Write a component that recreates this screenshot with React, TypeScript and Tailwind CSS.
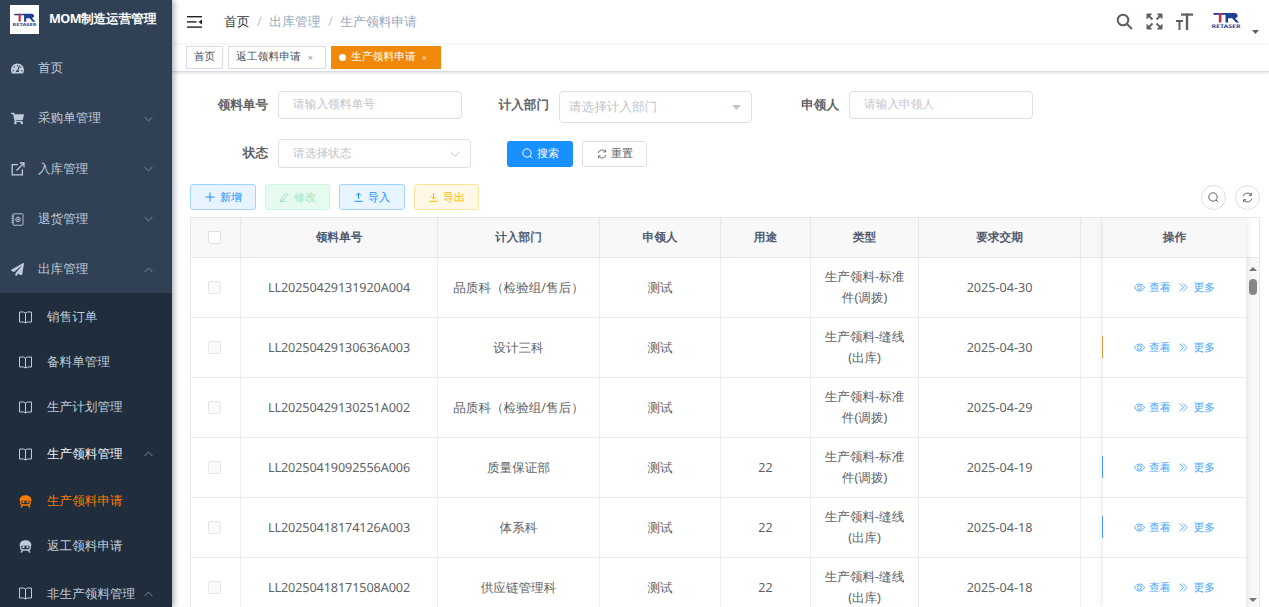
import React from "react";
import { FaTachometerAlt, FaShoppingCart, FaPaperPlane } from "react-icons/fa";

const Logo = ({ w, h }: { w: number; h: number }) => (
  <svg width={w} height={h} viewBox="0 0 30 17">
    <rect x="2.500" y="1" width="13" height="1.800" fill="#1f3f94" />
    <rect x="7.800" y="1" width="2.600" height="9.500" fill="#d02a3a" />
    <path d="M14.500 1h9c4 0 4.200 5 .5 5.200l4.300 4.300h-3.200l-4-4.200h-4v4.200h-2.600z" fill="#1f3f94" />
    <text x="0.500" y="16.200" textLength="29" lengthAdjust="spacingAndGlyphs" fontSize="5" fontWeight="700" fill="#2b4a9b">RETASER</text>
  </svg>
);

const Book = ({ c = "#bfcbd9" }: { c?: string }) => (
  <svg width="13" height="13" viewBox="0 0 13 13" fill="none" stroke={c} strokeWidth="1">
    <path d="M.5 1h4.200l1.800 1 1.800-1h4.200v10H8.300l-1.800 1-1.800-1H.5zM6.500 2v10" />
  </svg>
);

const Bot = ({ c }: { c: string }) => (
  <svg width="13" height="13" viewBox="0 0 13 13" fill="none" stroke={c} strokeWidth="1.300">
    <path d="M1.200 5C1.500 2.200 3.600.8 6.500.8s5 1.400 5.300 4.200z" fill={c} />
    <path d="M1.800 5v2.800c0 1.300 1 2.200 2.300 2.200h4.800c1.300 0 2.300-.9 2.300-2.200V5" />
    <path d="M3.800 10 2 12.500M9.200 10l1.800 2.500" />
    <circle cx="4.500" cy="7.200" r=".5" fill={c} />
    <circle cx="8.500" cy="7.200" r=".5" fill={c} />
  </svg>
);

const ExtLink = () => (
  <svg width="14" height="14" viewBox="0 0 14 14" fill="none" stroke="#bfcbd9" strokeWidth="1.300">
    <path d="M7 2.600H1.200v10.200h10.200V7.200M5.500 8.500 12.800 1.200M8.800 1H13v4.200" />
  </svg>
);

const Notebook = () => (
  <svg width="13" height="13" viewBox="0 0 13 13" fill="none" stroke="#bfcbd9" strokeWidth=".9">
    <rect x="2" y=".8" width="10" height="11.400" rx=".6" />
    <circle cx="7" cy="6.500" r="2.300" />
    <circle cx="7" cy="6.500" r=".7" fill="#bfcbd9" />
    <path d="M.5 3H3M.5 5.200H3M.5 7.400H3M.5 9.600H3" />
  </svg>
);

const Chevron = ({ up }: { up?: boolean }) => (
  <svg width="9" height="6" viewBox="0 0 9 6" fill="none" stroke="#7e8b9b" strokeWidth="1" className={up ? "rotate-180" : ""}>
    <path d="M.6 1 4.500 4.900 8.400 1" />
  </svg>
);

const SearchIco = ({ c = "currentColor", s = 11 }: { c?: string; s?: number }) => (
  <svg width={s} height={s} viewBox="0 0 11 11" fill="none" stroke={c} strokeWidth="1">
    <circle cx="5" cy="5" r="4.200" />
    <path d="M8 8l2.200 2.200" />
  </svg>
);

const Refresh = ({ c = "currentColor", s = 11 }: { c?: string; s?: number }) => (
  <svg width={s} height={s} viewBox="0 0 11 11" fill="none" stroke={c} strokeWidth="1">
    <path d="M1.200 4.400A4.400 4.400 0 0 1 9 2.800M9.800 6.600A4.400 4.400 0 0 1 2 8.200" />
    <path d="M9.400.9v2.400H7M1.600 10.100V7.700H4" />
  </svg>
);

const Eye = () => (
  <svg width="11" height="9" viewBox="0 0 11 9" fill="none" stroke="#46a6ff" strokeWidth=".9">
    <path d="M.5 4.500C1.700 2.200 3.400 1 5.500 1s3.800 1.200 5 3.500C9.300 6.800 7.600 8 5.500 8S1.700 6.800.5 4.500z" />
    <circle cx="5.500" cy="4.500" r="2" />
  </svg>
);

const DArrow = () => (
  <svg width="9" height="9" viewBox="0 0 9 9" fill="none" stroke="#46a6ff" strokeWidth=".9">
    <path d="M.8.6 4.600 4.500.8 8.400M4.200.6 8 4.500 4.200 8.400" />
  </svg>
);

type Item = { label: string; icon: React.ReactNode; arrow?: "up" | "down"; tone?: string; h: string };

const topItems: Item[] = [
  { label: "首页", icon: <FaTachometerAlt size={13} color="#bfcbd9" />, h: "h-[50.400px]" },
  { label: "采购单管理", icon: <FaShoppingCart size={13} color="#bfcbd9" />, arrow: "down", h: "h-[50.400px]" },
  { label: "入库管理", icon: <ExtLink />, arrow: "down", h: "h-[50.400px]" },
  { label: "退货管理", icon: <Notebook />, arrow: "down", h: "h-[50.400px]" },
  { label: "出库管理", icon: <FaPaperPlane size={13} color="#bfcbd9" />, arrow: "up", h: "h-[50.400px]" },
];

const subItems: Item[] = [
  { label: "销售订单", icon: <Book />, h: "h-[45px]" },
  { label: "备料单管理", icon: <Book />, h: "h-[45px]" },
  { label: "生产计划管理", icon: <Book />, h: "h-[45px]" },
  { label: "生产领料管理", icon: <Book />, arrow: "up", tone: "text-[#f4f4f5]", h: "h-[49px]" },
  { label: "生产领料申请", icon: <Bot c="#f57c00" />, tone: "text-[#f57c00]", h: "h-[45px]" },
  { label: "返工领料申请", icon: <Bot c="#bfcbd9" />, h: "h-[45px]" },
  { label: "非生产领料管理", icon: <Book />, arrow: "up", h: "h-[50px]" },
];

const MenuRow = ({ item, sub }: { item: Item; sub?: boolean }) => (
  <div className={`flex items-center shrink-0 ${item.h} ${sub ? "pl-[19px]" : "pl-[11px]"} pr-[19px]`}>
    <span className={`flex justify-start shrink-0 ${sub ? "w-[28px]" : "w-[27px]"}`}>{item.icon}</span>
    <span className={`flex-1 whitespace-nowrap text-[12.600px] ${item.tone ?? "text-[#bfcbd9]"}`}>{item.label}</span>
    {item.arrow && <Chevron up={item.arrow === "up"} />}
  </div>
);

const Sidebar = () => (
  <aside className="w-[172px] shrink-0 h-full bg-[#304156] flex flex-col overflow-hidden shadow-[2px_0_6px_rgba(0,21,41,0.35)] z-20">
    <div className="h-[43px] shrink-0 flex items-start pl-[10px] pt-[5px]">
      <div className="w-[29px] h-[29px] bg-white flex items-center justify-center">
        <Logo w={25} h={14} />
      </div>
      <span className="ml-[10px] mt-[5px] text-white font-bold text-[12.600px] whitespace-nowrap">
        <span className="tracking-[-0.6px]">MOM</span>制造运营管理
      </span>
    </div>
    {topItems.map((i) => (
      <MenuRow key={i.label} item={i} />
    ))}
    <div className="bg-[#1f2d3d] flex flex-col flex-1 -mt-[2px] pt-[2px]">
      {subItems.map((i) => (
        <MenuRow key={i.label} item={i} sub />
      ))}
    </div>
  </aside>
);

const TopBar = () => (
  <div className="h-[43px] shrink-0 flex items-center pl-[15px] pr-[10px] bg-white shadow-[0_1px_3px_rgba(0,21,41,0.06)] relative z-10">
    <svg width="15" height="12" viewBox="0 0 15 12" fill="#222">
      <rect y="0" width="15" height="1.400" />
      <rect y="5.200" width="9.500" height="1.400" />
      <rect y="10.400" width="15" height="1.400" />
      <path d="M15 3.400v5l-3.500-2.500z" />
    </svg>
    <div className="ml-[22px] flex items-center text-[12.800px]">
      <span className="text-[#303133]">首页</span>
      <span className="mx-[7.500px] text-[#c0c4cc]">/</span>
      <span className="text-[#97a8be]">出库管理</span>
      <span className="mx-[7.500px] text-[#c0c4cc]">/</span>
      <span className="text-[#97a8be]">生产领料申请</span>
    </div>
    <div className="ml-auto flex items-center">
      <svg width="17" height="17" viewBox="0 0 17 17" fill="none" stroke="#5a5e66" strokeWidth="2">
        <circle cx="7" cy="7" r="5.300" />
        <path d="M11 11l5 5" />
      </svg>
      <svg className="ml-[13px]" width="17" height="17" viewBox="0 0 17 17" fill="#5a5e66" stroke="#5a5e66" strokeWidth="1">
        <path d="M1 1h4.500L1 5.500zM16 1v4.500L11.500 1zM16 16h-4.500L16 11.500zM1 16v-4.500L5.500 16z" />
        <path d="M3 3l3.500 3.500M14 3l-3.500 3.500M14 14l-3.500-3.500M3 14l3.500-3.500" strokeWidth="1.800" />
      </svg>
      <svg className="ml-[13px]" width="17" height="17" viewBox="0 0 17 17" fill="#5a5e66">
        <rect x="5" y="0.500" width="12" height="2.200" />
        <rect x="9.800" y="0.500" width="2.400" height="16.500" />
        <rect x="0" y="7" width="7" height="2" />
        <rect x="2.500" y="7" width="2" height="10" />
      </svg>
      <span className="ml-[18px] mt-[-3px]">
        <Logo w={30} h={17} />
      </span>
      <svg className="ml-[11px] mt-[20px]" width="7" height="4" viewBox="0 0 7 4" fill="#5a5e66">
        <path d="M0 0h7L3.500 4z" />
      </svg>
    </div>
  </div>
);

const TagsBar = () => (
  <div className="h-[29px] shrink-0 flex items-start pt-[3px] pl-[14px] gap-[5px] bg-white border-b border-[#d8dce5] shadow-[0_1px_3px_rgba(0,0,0,0.12)] text-[10.800px] relative z-[5]">
    <span className="h-[23px] w-[37px] flex items-center justify-center border border-[#d8dce5] text-[#495060]">首页</span>
    <span className="h-[23px] w-[98px] flex items-center pl-[7px] border border-[#d8dce5] text-[#495060]">
      返工领料申请<span className="ml-[7px] text-[9px] text-[#8a8f99]">×</span>
    </span>
    <span className="h-[23px] w-[110px] flex items-center pl-[7px] bg-[#f0880a] border border-[#f0880a] text-white">
      <span className="w-[7px] h-[7px] rounded-full bg-white mr-[5px]" />
      生产领料申请<span className="ml-[6px] text-[9px] text-[#fde3c4]">×</span>
    </span>
  </div>
);

const Label = ({ children }: { children: React.ReactNode }) => (
  <label className="w-[78px] mr-[10px] shrink-0 text-right font-bold text-[12.600px] text-[#606266]">{children}</label>
);

const Field = ({ ph, w, h, small, right, pl = "pl-[14px]" }: { ph: string; w: string; h: string; small?: boolean; right?: React.ReactNode; pl?: string }) => (
  <div className={`${w} ${h} ${pl} pr-[10px] flex items-center justify-between rounded-[4px] border border-[#dcdfe6] bg-white`}>
    <span className={`${small ? "text-[11.700px]" : "text-[12.600px]"} text-[#c0c4cc] whitespace-nowrap`}>{ph}</span>
    {right}
  </div>
);

const SearchForm = () => (
  <div className="flex flex-col">
    <div className="flex items-start">
      <div className="flex items-center h-[28px]">
        <Label>领料单号</Label>
        <Field ph="请输入领料单号" w="w-[184px]" h="h-[28px]" small />
      </div>
      <div className="flex items-start ml-[9px]">
        <div className="h-[28px] flex items-center">
          <Label>计入部门</Label>
        </div>
        <Field
          ph="请选择计入部门"
          w="w-[193px]"
          h="h-[32px]"
          pl="pl-[9px]"
          right={
            <svg width="9" height="5" viewBox="0 0 9 5" fill="#c0c4cc">
              <path d="M0 0h9L4.500 5z" />
            </svg>
          }
        />
      </div>
      <div className="flex items-center h-[28px] ml-[9px]">
        <Label>申领人</Label>
        <Field ph="请输入申领人" w="w-[184px]" h="h-[28px]" small />
      </div>
    </div>
    <div className="flex items-center mt-[16px] h-[29px]">
      <Label>状态</Label>
      <Field
        ph="请选择状态"
        w="w-[193px]"
        h="h-[29px]"
        small
        right={
          <svg width="10" height="6" viewBox="0 0 10 6" fill="none" stroke="#c0c4cc" strokeWidth="1">
            <path d="M.6.800 5 5.200 9.400.800" />
          </svg>
        }
      />
      <button className="ml-[36px] w-[66px] h-[26px] rounded-[3px] bg-[#1890ff] text-white text-[10.800px] flex items-center justify-center gap-[4px]">
        <SearchIco c="#fff" /> 搜索
      </button>
      <button className="ml-[9px] w-[65px] h-[26px] rounded-[3px] bg-white border border-[#dcdfe6] text-[#606266] text-[10.800px] flex items-center justify-center gap-[4px]">
        <Refresh c="#606266" s={10} /> 重置
      </button>
    </div>
  </div>
);

const ToolBtn = ({ label, icon, cls, w }: { label: string; icon: React.ReactNode; cls: string; w: string }) => (
  <button className={`${w} h-[26px] rounded-[3px] border text-[10.800px] flex items-center justify-center gap-[5px] ${cls}`}>
    {icon}
    {label}
  </button>
);

const Toolbar = () => (
  <div className="flex items-center mt-[16px] h-[26px]">
    <div className="flex gap-[9px]">
      <ToolBtn
        w="w-[66px]"
        label="新增"
        cls="bg-[#e8f4ff] border-[#a3d3ff] text-[#1890ff]"
        icon={
          <svg width="10" height="10" viewBox="0 0 10 10" stroke="#1890ff" strokeWidth="1">
            <path d="M5 .5v9M.5 5h9" />
          </svg>
        }
      />
      <ToolBtn
        w="w-[65px]"
        label="修改"
        cls="bg-[#e7faf0] border-[#d0f5e0] text-[#a3e7c0]"
        icon={
          <svg width="10" height="10" viewBox="0 0 10 10" fill="none" stroke="#8fe0b0" strokeWidth=".9">
            <path d="M2 7 7 1.200 8.800 2.800 3.800 8.200 1.800 8.600zM.8 9.500h5" />
          </svg>
        }
      />
      <ToolBtn
        w="w-[66px]"
        label="导入"
        cls="bg-[#e8f4ff] border-[#a3d3ff] text-[#1890ff]"
        icon={
          <svg width="9" height="10" viewBox="0 0 9 10" fill="none" stroke="#1890ff" strokeWidth="1">
            <path d="M.5 9.300h8M4.500 7V1.200M2 3.500 4.500 1 7 3.500" />
          </svg>
        }
      />
      <ToolBtn
        w="w-[65px]"
        label="导出"
        cls="bg-[#fff8e6] border-[#ffe399] text-[#ffba00]"
        icon={
          <svg width="9" height="10" viewBox="0 0 9 10" fill="none" stroke="#ffba00" strokeWidth="1">
            <path d="M.5 9.300h8M4.500 1v5.800M2 4.500 4.500 7 7 4.500" />
          </svg>
        }
      />
    </div>
    <div className="ml-auto flex gap-[9px]">
      <span className="w-[25px] h-[25px] rounded-full border border-[#dcdfe6] bg-white flex items-center justify-center">
        <SearchIco c="#606266" />
      </span>
      <span className="w-[25px] h-[25px] rounded-full border border-[#dcdfe6] bg-white flex items-center justify-center">
        <Refresh c="#606266" />
      </span>
    </div>
  </div>
);

const rows = [
  { no: "LL20250429131920A004", dept: "品质科（检验组/售后）", use: "", type: "生产领料-标准件(调拨)", date: "2025-04-30", tag: "" },
  { no: "LL20250429130636A003", dept: "设计三科", use: "", type: "生产领料-缝线(出库)", date: "2025-04-30", tag: "bg-[#e6a23c]" },
  { no: "LL20250429130251A002", dept: "品质科（检验组/售后）", use: "", type: "生产领料-标准件(调拨)", date: "2025-04-29", tag: "" },
  { no: "LL20250419092556A006", dept: "质量保证部", use: "22", type: "生产领料-标准件(调拨)", date: "2025-04-19", tag: "bg-[#46a6ff]" },
  { no: "LL20250418174126A003", dept: "体系科", use: "22", type: "生产领料-缝线(出库)", date: "2025-04-18", tag: "bg-[#46a6ff]" },
  { no: "LL20250418171508A002", dept: "供应链管理科", use: "22", type: "生产领料-缝线(出库)", date: "2025-04-18", tag: "" },
];

const cols = ["w-[50px]", "w-[197px]", "w-[162px]", "w-[121px]", "w-[90px]", "w-[108px]", "w-[162px]", "w-[120px]"];
const heads = ["", "领料单号", "计入部门", "申领人", "用途", "类型", "要求交期", ""];

const hCell = "h-[40px] shrink-0 flex items-center justify-center bg-[#f8f8f9] border-r border-b border-[#e4e8ee] font-bold text-[11.700px] text-[#515a6e]";
const bCell = "h-[60px] shrink-0 flex items-center justify-center border-r border-b border-[#e9ecf1] text-[12.600px] leading-[21px] text-[#606266] text-center pb-[1px]";

const Check = ({ head }: { head?: boolean }) => (
  <span className={`w-[13px] h-[13px] rounded-[2px] border mr-[3px] ${head ? "border-[#dcdfe6] bg-white" : "border-[#e4e7ed] bg-[#fafafa]"}`} />
);

const Table = () => (
  <div className="mt-[7px] flex flex-1 min-h-0 border-l border-t border-r border-[#e4e8ee] overflow-hidden">
    <div className="flex-1 min-w-0 overflow-hidden">
      <div className="flex">
        {heads.map((h, i) => (
          <div key={i} className={`${cols[i]} ${hCell}`}>
            {i === 0 ? <Check head /> : h}
          </div>
        ))}
      </div>
      {rows.map((r) => (
        <div key={r.no} className="flex">
          <div className={`${cols[0]} ${bCell}`}>
            <Check />
          </div>
          <div className={`${cols[1]} ${bCell} tracking-[-0.08px]`}>{r.no}</div>
          <div className={`${cols[2]} ${bCell}`}>{r.dept}</div>
          <div className={`${cols[3]} ${bCell}`}>测试</div>
          <div className={`${cols[4]} ${bCell}`}>{r.use}</div>
          <div className={`${cols[5]} ${bCell} px-[9px]`}>{r.type}</div>
          <div className={`${cols[6]} ${bCell}`}>{r.date}</div>
          <div className={`${cols[7]} ${bCell} !justify-start pl-[21px]`}>
            {r.tag && <span className={`w-[60px] h-[22px] ${r.tag}`} />}
          </div>
        </div>
      ))}
    </div>
    <div className="w-[143px] shrink-0 relative z-10 bg-white shadow-[0_0_7px_rgba(0,0,0,0.12)]">
      <div className={`${hCell} !border-r-0`}>操作</div>
      {rows.map((r) => (
        <div key={r.no} className="h-[60px] flex items-center justify-center border-b border-[#e9ecf1] text-[10.800px] text-[#46a6ff]">
          <Eye />
          <span className="ml-[4px] mt-[1px]">查看</span>
          <span className="ml-[8px]">
            <DArrow />
          </span>
          <span className="ml-[6px] mt-[1px]">更多</span>
        </div>
      ))}
    </div>
    <div className="w-[13px] shrink-0 flex flex-col">
      <div className="h-[40px] shrink-0 bg-white border-b border-[#e4e8ee]" />
      <div className="flex-1 bg-[#f8f8f8] flex flex-col items-center">
        <svg className="mt-[9px]" width="8" height="4" viewBox="0 0 8 4" fill="#777">
          <path d="M4 0l4 4H0z" />
        </svg>
        <span className="mt-[8px] w-[8px] h-[16px] rounded-[4px] bg-[#888]" />
        <svg className="mt-[303px]" width="8" height="4" viewBox="0 0 8 4" fill="#777">
          <path d="M0 0h8L4 4z" />
        </svg>
      </div>
    </div>
  </div>
);

export default function App() {
  return (
    <div className="w-screen h-screen flex overflow-hidden bg-white [text-rendering:geometricPrecision] [font-family:'Liberation_Sans','Noto_Sans_CJK_SC',sans-serif]">
      <Sidebar />
      <main className="flex-1 min-w-0 flex flex-col h-full">
        <TopBar />
        <TagsBar />
        <div className="flex-1 min-h-0 flex flex-col pt-[19px] pl-[18px] pr-[9px]">
          <SearchForm />
          <Toolbar />
          <Table />
        </div>
      </main>
    </div>
  );
}
